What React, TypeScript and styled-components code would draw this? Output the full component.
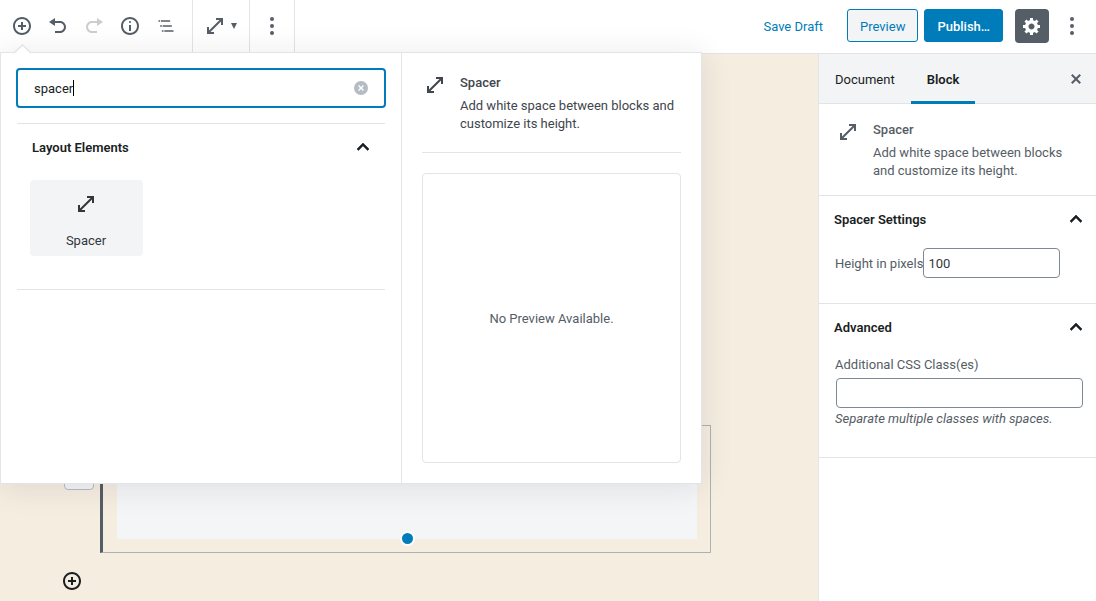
import React, { useState } from 'react';
import styled, { createGlobalStyle } from 'styled-components';

const color = {
  ink: '#191e23',
  text: '#40464d',
  muted: '#555d66',
  line: '#e2e4e7',
  field: '#7e8993',
  panel: '#f3f4f5',
  accent: '#007cba',
  canvas: '#f5ede0',
};

const GlobalStyle = createGlobalStyle`
  *, *::before, *::after { box-sizing: border-box; }
  body {
    margin: 0;
    background: #fff;
    color: ${color.muted};
    font-family: Roboto, "Liberation Sans", sans-serif;
    font-size: 13px;
    line-height: 18px;
  }
  button, input { font: inherit; color: inherit; }
  button { cursor: pointer; }
  h2, h3, p { margin: 0; font-size: 13px; }
`;

/* ---------- icons ---------- */

const Svg = styled.svg`
  display: block;
  flex: none;
  fill: currentColor;
`;

const icons = {
  insert: [20, 'M10 1c-5 0-9 4-9 9s4 9 9 9 9-4 9-9-4-9-9-9zm0 16c-3.9 0-7-3.1-7-7s3.1-7 7-7 7 3.1 7 7-3.1 7-7 7zm1-11H9v3H6v2h3v3h2v-3h3V9h-3V6z'],
  undo: [20, 'M12 5H7V2L1 6l6 4V7h5c2.2 0 4 1.8 4 4s-1.8 4-4 4H7v2h5c3.3 0 6-2.7 6-6s-2.7-6-6-6z'],
  redo: [20, 'M8 5h5V2l6 4-6 4V7H8c-2.2 0-4 1.8-4 4s1.8 4 4 4h5v2H8c-3.3 0-6-2.7-6-6s2.7-6 6-6z'],
  info: [20, 'M9 15h2V9H9v6zm1-10c-.5 0-1 .5-1 1s.5 1 1 1 1-.5 1-1-.5-1-1-1zm0-4c-5 0-9 4-9 9s4 9 9 9 9-4 9-9-4-9-9-9zm0 16c-3.9 0-7-3.1-7-7s3.1-7 7-7 7 3.1 7 7-3.1 7-7 7z'],
  outline: [24, 'M5 5H3v2h2V5zm3 8h11v-2H8v2zm9-8H6v2h11V5zM7 11H5v2h2v-2zm0 8h2v-2H7v2zm3-2v2h11v-2H10z'],
  spacer: [24, 'M13 4v2h3.59L6 16.59V13H4v7h7v-2H7.41L18 7.41V11h2V4h-7'],
  more: [20, 'M10 1a2 2 0 1 0 0 4 2 2 0 0 0 0-4zm0 7a2 2 0 1 0 0 4 2 2 0 0 0 0-4zm0 7a2 2 0 1 0 0 4 2 2 0 0 0 0-4z'],
  gear: [20, 'M18 12h-2.18c-.17.7-.44 1.35-.81 1.93l1.54 1.54-2.1 2.1-1.54-1.54c-.58.36-1.23.63-1.91.79V19H8v-2.18c-.68-.16-1.33-.43-1.91-.79l-1.54 1.54-2.12-2.12 1.54-1.54c-.36-.58-.63-1.23-.79-1.91H1V9.03h2.17c.16-.7.44-1.35.8-1.94L2.43 5.55l2.1-2.1 1.54 1.54c.58-.37 1.24-.64 1.93-.81V2h3v2.18c.68.16 1.33.43 1.91.79l1.54-1.54 2.12 2.12-1.54 1.54c.36.59.64 1.24.8 1.94H18V12zm-8.5 1.5c1.66 0 3-1.34 3-3s-1.34-3-3-3-3 1.34-3 3 1.34 3 3 3z'],
  chevron: [24, 'M12 8l-6 6 1.41 1.41L12 10.83l4.59 4.58L18 14z'],
  close: [20, 'M14.95 6.46L11.41 10l3.54 3.54-1.41 1.41L10 11.42l-3.53 3.53-1.42-1.42L8.58 10 5.05 6.47l1.42-1.42L10 8.58l3.54-3.53z'],
  clear: [14, 'M7 0a7 7 0 1 0 0 14A7 7 0 0 0 7 0zm2.9 8.9-1 1L7 8l-1.9 1.9-1-1L6 7 4.1 5.1l1-1L7 6l1.9-1.9 1 1L8 7z'],
  caret: [6, 'M0 0h6L3 6z'],
} as const;

function Icon({ name, size, bold }: { name: keyof typeof icons; size?: number; bold?: boolean }) {
  const [box, d] = icons[name];
  const px = size ?? box;
  return (
    <Svg width={px} height={px} viewBox={`0 0 ${box} ${box}`} aria-hidden="true">
      <path d={d} stroke={bold ? 'currentColor' : 'none'} strokeWidth={bold ? 0.6 : 0} />
    </Svg>
  );
}

/* ---------- page frame ---------- */

const Page = styled.div`
  min-height: 100vh;
  display: flex;
  flex-direction: column;
`;

const Header = styled.header`
  position: relative;
  z-index: 2;
  display: flex;
  justify-content: space-between;
  height: 54px;
  border-bottom: 1px solid ${color.line};
  background: #fff;
`;

const Body = styled.div`
  flex: 1;
  display: flex;
`;

/* ---------- header ---------- */

const Toolbar = styled.div`
  display: flex;
`;

const ToolGroup = styled.div<{ $pad: string }>`
  display: flex;
  align-items: center;
  padding: ${(p) => p.$pad};
  border-right: 1px solid ${color.line};
`;

const IconButton = styled.button<{ $width?: number }>`
  display: flex;
  align-items: center;
  justify-content: center;
  gap: 4px;
  width: ${(p) => p.$width ?? 36}px;
  height: 36px;
  padding: 0;
  border: 0;
  background: none;
  color: ${color.muted};
  &:disabled { opacity: 0.3; cursor: default; }
`;

const Actions = styled.div`
  display: flex;
  align-items: center;
  padding: 0 6px 2px 0;
`;

const LinkButton = styled.button`
  margin-right: 18px;
  padding: 2px 6px 0;
  border: 0;
  background: none;
  color: ${color.accent};
`;

const ActionButton = styled.button<{ $primary?: boolean }>`
  height: 33px;
  margin-right: ${(p) => (p.$primary ? 12 : 6)}px;
  padding: 2px 12px 0;
  border: 1px solid ${color.accent};
  border-radius: 3px;
  background: ${(p) => (p.$primary ? color.accent : color.panel)};
  color: ${(p) => (p.$primary ? '#fff' : color.accent)};
  font-weight: ${(p) => (p.$primary ? 500 : 400)};
`;

const SettingsToggle = styled.button`
  display: flex;
  align-items: center;
  justify-content: center;
  width: 34px;
  height: 34px;
  margin-right: 5px;
  padding: 0;
  border: 0;
  border-radius: 4px;
  background: ${color.muted};
  color: #fff;
`;

/* ---------- inserter popover ---------- */

const Popover = styled.section`
  position: absolute;
  top: 52px;
  left: 0;
  display: grid;
  grid-template-columns: 400px 300px;
  border: 1px solid ${color.line};
  background: #fff;
  box-shadow: 0 3px 30px rgba(25, 30, 35, 0.1);
`;

const Notch = styled.svg`
  position: absolute;
  top: -9px;
  left: 13px;
`;

const Results = styled.div`
  padding: 15px;
`;

const SearchBox = styled.div`
  position: relative;
  display: flex;
`;

const SearchInput = styled.input`
  flex: 1;
  min-width: 0;
  height: 40px;
  padding: 0 40px 0 16px;
  border: 2px solid ${color.accent};
  border-radius: 4px;
  outline: 0;
  background: #fff;
  color: ${color.ink};
`;

const TextCursor = styled.span`
  position: absolute;
  top: 12px;
  left: 57px;
  width: 1px;
  height: 16px;
  background: #000;
`;

const ClearButton = styled.button`
  position: absolute;
  top: 13px;
  right: 18px;
  padding: 0;
  border: 0;
  background: none;
  color: #b5bcc2;
`;

const Category = styled.div`
  margin: 15px 1px 0;
  padding-bottom: 33px;
  border-top: 1px solid ${color.line};
  border-bottom: 1px solid ${color.line};
`;

const PanelToggle = styled.button<{ $inset?: number }>`
  display: flex;
  align-items: center;
  justify-content: space-between;
  width: 100%;
  height: 46px;
  padding: 0 ${(p) => p.$inset ?? 8}px 0 15px;
  border: 0;
  background: none;
  color: ${color.ink};
  font-weight: 600;
`;

const PanelTitle = styled.span`
  padding-top: 2px;
`;

const BlockTile = styled.button`
  display: flex;
  flex-direction: column;
  align-items: center;
  gap: 16px;
  width: 113px;
  height: 76px;
  margin: 10px 0 0 13px;
  padding: 12px 1px 0 0;
  border: 0;
  border-radius: 4px;
  background: ${color.panel};
  color: #32373c;
`;

const Details = styled.div`
  display: flex;
  flex-direction: column;
  padding: 20px;
  border-left: 1px solid ${color.line};
`;

const PreviewBox = styled.div`
  display: flex;
  align-items: center;
  justify-content: center;
  height: 290px;
  margin-top: 20px;
  padding-top: 2px;
  border: 1px solid ${color.line};
  border-radius: 4px;
`;

const Card = styled.div<{ $inPopover?: boolean }>`
  display: flex;
  gap: 13px;
  padding: ${(p) => (p.$inPopover ? '0 0 19px 1px' : '16px 16px 15px 17px')};
  border-bottom: 1px solid ${color.line};
  color: ${(p) => (p.$inPopover ? color.text : color.muted)};
`;

const CardText = styled.div`
  padding-top: 1px;
`;

const CardTitle = styled.h2`
  margin-bottom: 5px;
  font-weight: 500;
`;

/* ---------- canvas ---------- */

const Canvas = styled.main`
  flex: 1;
  min-width: 0;
  padding: 371px 107px 10px 62px;
  background: ${color.canvas};
`;

const BlockRow = styled.div`
  display: flex;
  gap: 6px;
  padding-left: 2px;
`;

const Mover = styled.div`
  width: 30px;
  height: 65px;
  border: 1px solid #b5bcc2;
  border-radius: 4px;
  background: ${color.panel};
`;

const SelectedBlock = styled.div`
  flex: 1;
  padding: 13px;
  border: 1px solid #adb1b5;
  border-left: 3px solid ${color.muted};
`;

const SpacerArea = styled.div`
  position: relative;
  height: 100px;
  margin-left: 1px;
  background: #f3f5f7;
`;

const ResizeHandle = styled.span`
  position: absolute;
  bottom: -7px;
  left: calc(50% - 7px);
  width: 15px;
  height: 15px;
  border: 2px solid #fff;
  border-radius: 50%;
  background: ${color.accent};
`;

const Appender = styled.button`
  display: block;
  margin-top: 18px;
  padding: 0;
  border: 0;
  background: none;
  color: ${color.ink};
`;

/* ---------- sidebar ---------- */

const Sidebar = styled.aside`
  flex: none;
  width: 278px;
  border-left: 1px solid ${color.line};
  background: #fff;
`;

const Tabs = styled.div`
  display: flex;
  height: 50px;
  padding-right: 2px;
  border-bottom: 1px solid ${color.line};
  background: ${color.panel};
`;

const Tab = styled.button<{ $active?: boolean }>`
  height: 50px;
  padding: 5px 16px 0;
  border: 0;
  border-bottom: 3px solid ${(p) => (p.$active ? color.accent : 'transparent')};
  background: none;
  color: ${color.ink};
  font-weight: ${(p) => (p.$active ? 600 : 400)};
`;

const CloseButton = styled(IconButton)`
  height: 50px;
  margin-left: auto;
`;

const Panel = styled.section`
  padding-bottom: 25px;
  border-bottom: 1px solid ${color.line};
`;

const InlineField = styled.div`
  display: flex;
  align-items: center;
  padding: 6px 36px 0 16px;
`;

const InlineLabel = styled.label`
  padding-top: 2px;
`;

const StackedField = styled.div`
  display: flex;
  flex-direction: column;
  padding: 6px 13px 4px 16px;
`;

const Field = styled.input<{ $block?: boolean }>`
  flex: 1;
  min-width: 0;
  min-height: 30px;
  margin: ${(p) => (p.$block ? '4px 0 2px 1px' : '0')};
  padding: 2px 4px 0;
  border: 1px solid ${color.field};
  border-radius: 4px;
  background: #fff;
  color: #32373c;
`;

const Help = styled.p`
  font-style: italic;
`;

function BlockCard({ inPopover }: { inPopover?: boolean }) {
  return (
    <Card $inPopover={inPopover}>
      <Icon name="spacer" size={24} />
      <CardText>
        <CardTitle>Spacer</CardTitle>
        <p>Add white space between blocks and customize its height.</p>
      </CardText>
    </Card>
  );
}

export default function App() {
  const [query, setQuery] = useState('spacer');
  const [height, setHeight] = useState('100');
  const [cssClass, setCssClass] = useState('');

  return (
    <>
      <GlobalStyle />
      <Page>
        <Header>
          <Toolbar>
            <ToolGroup $pad="0 8px 2px 4px">
              <IconButton aria-label="Add block"><Icon name="insert" /></IconButton>
              <IconButton aria-label="Undo"><Icon name="undo" /></IconButton>
              <IconButton aria-label="Redo" disabled><Icon name="redo" /></IconButton>
              <IconButton aria-label="Content structure"><Icon name="info" /></IconButton>
              <IconButton aria-label="Block navigation"><Icon name="outline" size={20} /></IconButton>
            </ToolGroup>
            <ToolGroup $pad="0 2px 2px 0">
              <IconButton $width={54} aria-label="Change block type">
                <Icon name="spacer" />
                <Icon name="caret" />
              </IconButton>
            </ToolGroup>
            <ToolGroup $pad="0 4px 2px">
              <IconButton aria-label="More options"><Icon name="more" /></IconButton>
            </ToolGroup>
          </Toolbar>
          <Actions>
            <LinkButton>Save Draft</LinkButton>
            <ActionButton>Preview</ActionButton>
            <ActionButton $primary>Publish…</ActionButton>
            <SettingsToggle aria-label="Settings"><Icon name="gear" /></SettingsToggle>
            <IconButton aria-label="More tools"><Icon name="more" /></IconButton>
          </Actions>

          <Popover aria-label="Block inserter">
            <Notch width="17" height="10" viewBox="0 0 17 10" aria-hidden="true">
              <path d="M0 9.5 8.5 1 17 9.5V10H0z" fill="#fff" />
              <path d="M0 9 8.5 1 17 9" fill="none" stroke={color.line} strokeWidth="1.4" />
            </Notch>
            <Results>
              <SearchBox>
                <SearchInput
                  aria-label="Search for a block"
                  value={query}
                  onChange={(e) => setQuery(e.target.value)}
                />
                <TextCursor />
                <ClearButton aria-label="Clear search" onClick={() => setQuery('')}>
                  <Icon name="clear" />
                </ClearButton>
              </SearchBox>
              <Category>
                <PanelToggle $inset={10}>
                  <PanelTitle>Layout Elements</PanelTitle>
                  <Icon name="chevron" bold />
                </PanelToggle>
                <BlockTile>
                  <Icon name="spacer" />
                  Spacer
                </BlockTile>
              </Category>
            </Results>
            <Details>
              <BlockCard inPopover />
              <PreviewBox>No Preview Available.</PreviewBox>
            </Details>
          </Popover>
        </Header>

        <Body>
          <Canvas>
            <BlockRow>
              <Mover />
              <SelectedBlock>
                <SpacerArea>
                  <ResizeHandle />
                </SpacerArea>
              </SelectedBlock>
            </BlockRow>
            <Appender aria-label="Add block"><Icon name="insert" /></Appender>
          </Canvas>

          <Sidebar>
            <Tabs>
              <Tab>Document</Tab>
              <Tab $active>Block</Tab>
              <CloseButton aria-label="Close settings"><Icon name="close" /></CloseButton>
            </Tabs>
            <BlockCard />
            <Panel>
              <PanelToggle>
                <PanelTitle>Spacer Settings</PanelTitle>
                <Icon name="chevron" bold />
              </PanelToggle>
              <InlineField>
                <InlineLabel htmlFor="spacer-height">Height in pixels</InlineLabel>
                <Field id="spacer-height" value={height} onChange={(e) => setHeight(e.target.value)} />
              </InlineField>
            </Panel>
            <Panel>
              <PanelToggle>
                <PanelTitle>Advanced</PanelTitle>
                <Icon name="chevron" bold />
              </PanelToggle>
              <StackedField>
                <label htmlFor="css-class">Additional CSS Class(es)</label>
                <Field $block id="css-class" value={cssClass} onChange={(e) => setCssClass(e.target.value)} />
                <Help>Separate multiple classes with spaces.</Help>
              </StackedField>
            </Panel>
          </Sidebar>
        </Body>
      </Page>
    </>
  );
}
